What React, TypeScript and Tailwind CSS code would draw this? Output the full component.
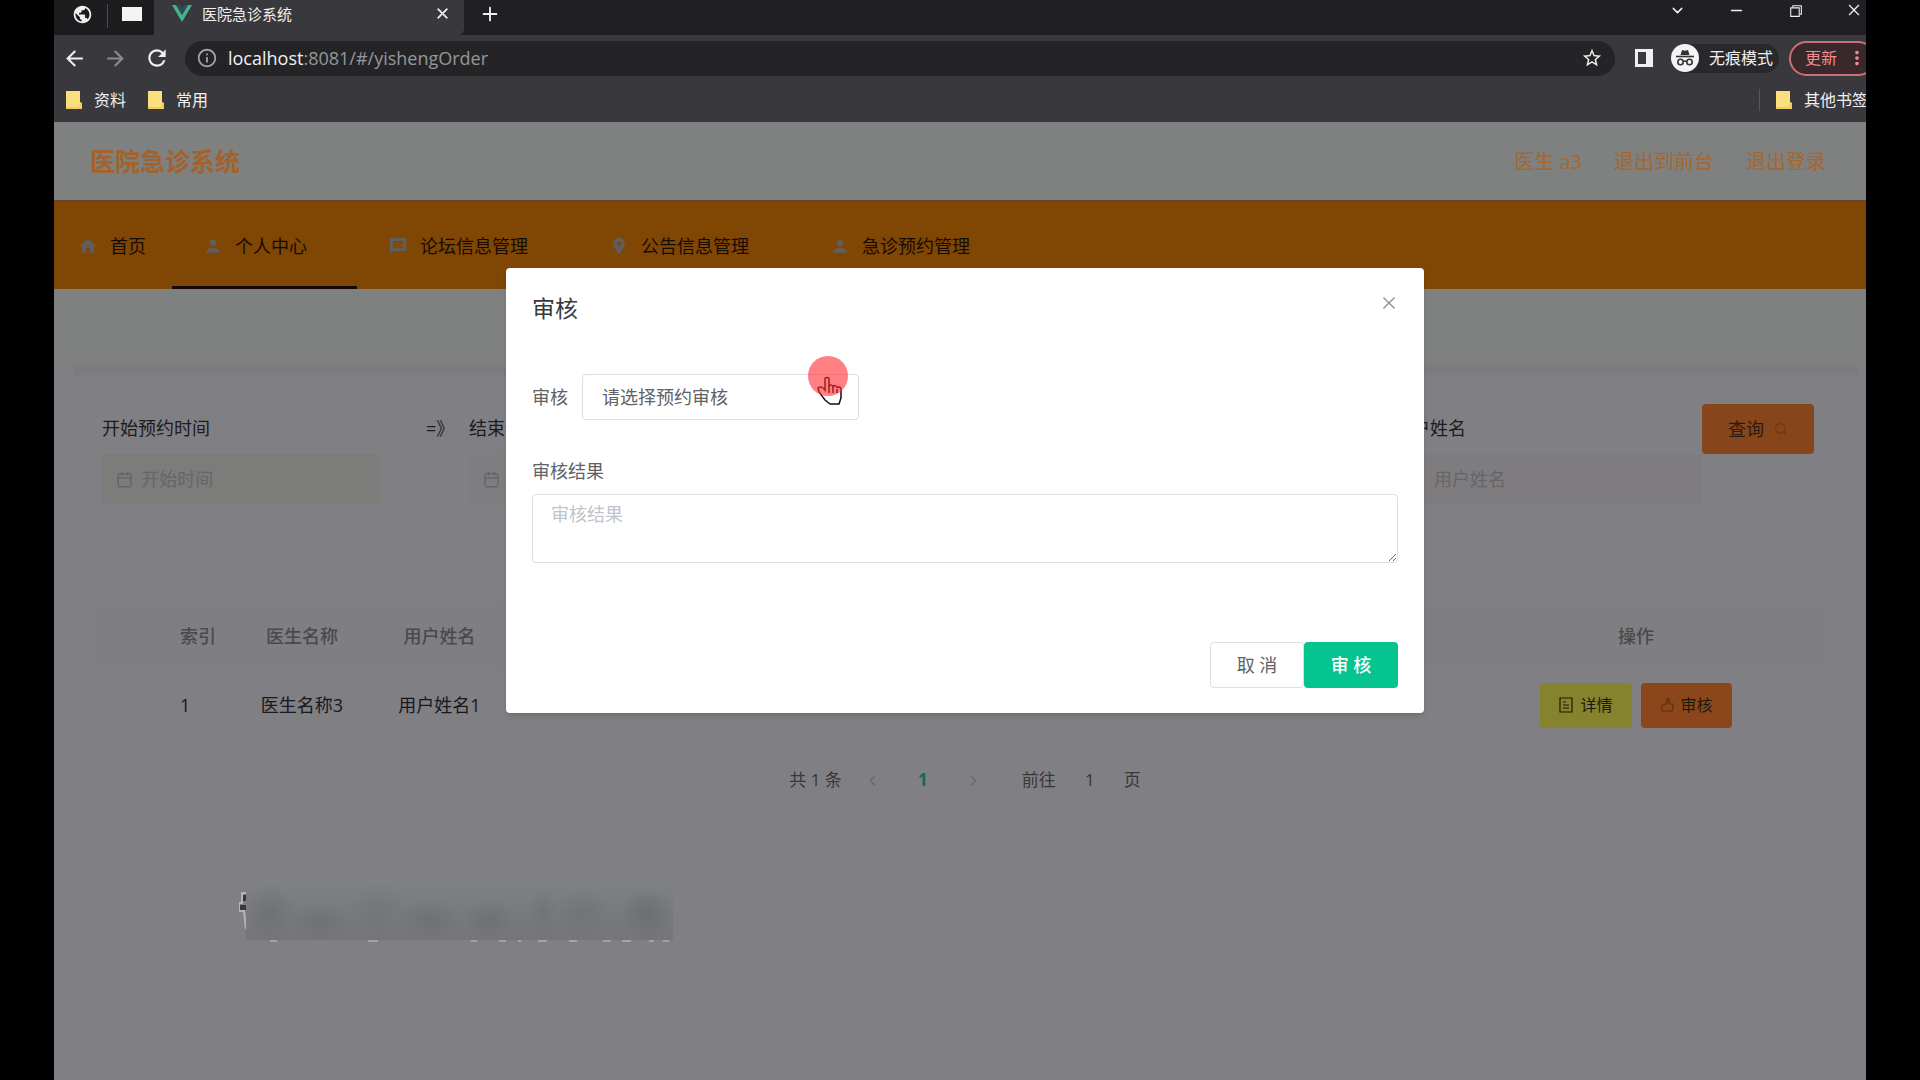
import React, { useState } from 'react'
import { AiOutlineClose } from 'react-icons/ai'
import { FiPlus, FiChevronDown, FiMinus } from 'react-icons/fi'
import { MdArrowBack, MdArrowForward, MdRefresh, MdInfoOutline, MdStarOutline, MdPublic, MdHome, MdPerson, MdMessage, MdLocationOn, MdMoreVert } from 'react-icons/md'
import { VscChromeRestore } from 'react-icons/vsc'
import { LuCalendar, LuChevronLeft, LuChevronRight, LuSearch } from 'react-icons/lu'

const menus = [
  { name: '个人中心', icon: MdPerson },
  { name: '论坛信息管理', icon: MdMessage },
  { name: '公告信息管理', icon: MdLocationOn },
  { name: '急诊预约管理', icon: MdPerson },
]

function Folder() {
  return (
    <svg width="16" height="18" viewBox="0 0 16 18">
      <path d="M0 0h14v11l2 1v6H0z" fill="#fbdf7c" />
      <path d="M0 16h13l1-4 2 1v5H0z" fill="#f3cf5c" />
    </svg>
  )
}

function Incognito() {
  return (
    <svg width="28" height="28" viewBox="0 0 28 28">
      <circle cx="14" cy="14" r="14" fill="#f4f4f5" />
      <path d="M9.500 11l1.500-5 3 .8 3-.8 1.500 5z" fill="#333236" />
      <path d="M5 12.500h18" stroke="#333236" strokeWidth="1.600" />
      <g fill="none" stroke="#333236" strokeWidth="1.600">
        <circle cx="9.500" cy="18" r="2.700" />
        <circle cx="18.500" cy="18" r="2.700" />
        <path d="M12.200 17.500q1.800-1 3.600 0" />
      </g>
    </svg>
  )
}

function DetailIcon() {
  return (
    <svg width="14" height="16" viewBox="0 0 14 16" fill="none" stroke="currentColor" strokeWidth="1.200">
      <path d="M1 1h12v14H1zM4 5h3M4 8h6M4 11h6" />
    </svg>
  )
}

function ThumbIcon() {
  return (
    <svg width="15" height="16" viewBox="0 0 15 16" fill="none" stroke="currentColor" strokeWidth="1.200" className="text-[#5b2f12]">
      <path d="M2 8h3l2-3V2c0-1 2-1 2 0v5h4v4l-1 3H2z" />
    </svg>
  )
}

function Browser() {
  return (
    <div className="bg-[#39383c] text-[#f0f0f1]">
      <div className="h-[35px] flex bg-[#202024]">
        <div className="w-[100px] flex items-start pt-1 pl-[18px] bg-[#1d1d1f]">
          <MdPublic size={21} />
          <span className="w-px h-6 ml-3.5 bg-[#4c4c50]"></span>
          <span className="w-5 h-3.5 mt-[3px] ml-3.5 bg-[#f4f4f4]"></span>
        </div>
        <div className="w-[310px] h-full flex items-start pt-[3px] pl-[18px] pr-3.5 bg-[#39383c] rounded-br-md">
          <svg width="20" height="20" viewBox="0 0 20 18">
            <path d="M0 1h4l6 10 6-10h4L10 18z" fill="#41b883" />
            <path d="M4 1h4l2 3.500L12 1h4l-6 10z" fill="#35495e" />
          </svg>
          <span className="ml-2.5 text-[15px] leading-[22px]">医院急诊系统</span>
          <button aria-label="关闭标签页" className="ml-auto mt-[3px]"><AiOutlineClose size={15} strokeWidth={50} /></button>
        </div>
        <button aria-label="新标签页" className="ml-[15px] h-7"><FiPlus size={22} /></button>
        <div className="ml-auto mr-3.5 h-5 flex items-center gap-[42px]">
          <button aria-label="搜索标签页"><FiChevronDown size={17} /></button>
          <button aria-label="最小化"><FiMinus size={17} /></button>
          <button aria-label="还原"><VscChromeRestore size={17} /></button>
          <button aria-label="关闭"><AiOutlineClose size={16} /></button>
        </div>
      </div>

      <div className="h-[46px] flex items-center pl-2">
        <button aria-label="后退"><MdArrowBack size={25} /></button>
        <button aria-label="前进" className="ml-4 text-[#8b8b8e]"><MdArrowForward size={25} /></button>
        <button aria-label="刷新" className="ml-4"><MdRefresh size={26} /></button>
        <div className="ml-[15px] h-[35px] grow flex items-center pl-[11px] pr-3 rounded-full bg-[#242427] text-lg">
          <MdInfoOutline size={22} className="text-[#a2a2a4]" />
          <span className="ml-2.5">localhost</span>
          <span className="text-[#97979a]">:8081/#/yishengOrder</span>
          <button aria-label="收藏" className="ml-auto"><MdStarOutline size={22} /></button>
        </div>
        <span className="ml-5 w-[18px] h-[18px] border-[3px] border-r-[7px] border-[#f0f0f1]"></span>
        <div className="ml-[18px] h-[29px] flex items-center gap-2.5 rounded-full bg-[#29292c] pr-1.5 text-base">
          <Incognito />
          <span>无痕模式</span>
        </div>
        <button className="ml-2.5 h-[35px] w-[87px] shrink-0 flex items-center justify-between pl-3.5 pr-1.5 rounded-full border-2 border-[#c9707a] bg-[#39292c] text-[#f08b8e] text-base">
          更新
          <MdMoreVert size={22} />
        </button>
      </div>

      <div className="h-[41px] flex items-center pl-3 pb-1 text-base">
        <Folder />
        <a href="#" className="ml-3">资料</a>
        <span className="w-[22px]"></span>
        <Folder />
        <a href="#" className="ml-3">常用</a>
        <span className="ml-auto w-px h-[22px] bg-[#58575b]"></span>
        <span className="w-4"></span>
        <Folder />
        <a href="#" className="ml-3 mr-2">其他书签</a>
      </div>
    </div>
  )
}

function Navbar() {
  return (
    <div>
      <div className="h-[78px] flex items-center justify-between pt-0.5 pl-9 pr-[50px] bg-[#7f8080]">
        <h1 className="text-[25px] font-bold text-[#a4622a]">医院急诊系统</h1>
        <div className="flex gap-8 text-xl text-[#a5672f]">
          <span>医生 a3</span>
          <a href="#">退出到前台</a>
          <a href="#">退出登录</a>
        </div>
      </div>
      <nav className="h-[89px] flex bg-[#7f4604] border-t-2 border-[#664430] text-lg text-[#170c02]">
        <a href="#" className="flex items-center gap-3 pl-6 pr-[26px]">
          <MdHome size={20} className="text-[#5f5e5c]" />
          首页
        </a>
        {menus.map((item, i) => (
          <a
            key={item.name}
            href="#"
            className={i === 0 ? 'flex items-center gap-3 pt-[3px] pl-[31px] pr-[50px] border-b-[3px] border-[#160707]' : 'flex items-center gap-3 pt-[3px] pl-[31px] pr-[50px] border-b-[3px] border-transparent'}
          >
            <item.icon size={20} className="text-[#5f5e5c]" />
            {item.name}
          </a>
        ))}
      </nav>
    </div>
  )
}

function Filters() {
  return (
    <form className="flex pl-7 pr-11 pt-[39px] text-lg text-[#1c1b1e]">
      <div className="w-[278px]">
        <label htmlFor="start" className="block leading-7">开始预约时间</label>
        <div className="mt-3 h-[50px] flex items-center gap-2 pl-3.5 bg-[#7c7c7b] text-[#666568]">
          <LuCalendar size={19} />
          <input id="start" placeholder="开始时间" className="w-full bg-transparent outline-none placeholder:text-[#666568]" />
        </div>
      </div>
      <span className="ml-[46px] w-[43px] leading-7">=》</span>
      <div className="w-[278px]">
        <label htmlFor="end" className="block leading-7">结束预约时间</label>
        <div className="mt-3 h-[50px] flex items-center gap-2 pl-3.5 bg-[#7e7d80] text-[#666568]">
          <LuCalendar size={19} />
          <input id="end" placeholder="结束时间" className="w-full bg-transparent outline-none placeholder:text-[#666568]" />
        </div>
      </div>
      <div className="ml-auto w-[308px]">
        <label htmlFor="user" className="block leading-7">用户姓名</label>
        <input id="user" placeholder="用户姓名" className="mt-3 h-[50px] w-full pl-10 bg-[#7e7c7e] outline-none placeholder:text-[#666568]" />
      </div>
      <button type="button" className="-mt-2.5 h-[50px] w-28 flex items-center justify-center gap-2.5 rounded bg-[#86451b] text-[#2c1a10]">
        查询
        <LuSearch size={14} className="text-[#6a3614]" />
      </button>
    </form>
  )
}

function Orders() {
  return (
    <table className="mt-[98px] w-full table-fixed text-lg">
      <thead>
        <tr className="h-[68px] text-[#4a494c] bg-[#7f7e82]">
          <th className="w-[71px]"></th>
          <th className="w-[66px] pl-[13px] text-left font-medium">索引</th>
          <th className="w-[138px] font-medium">医生名称</th>
          <th className="w-[137px] font-medium">用户姓名</th>
          <th></th>
          <th className="w-[380px] font-medium">操作</th>
        </tr>
      </thead>
      <tbody>
        <tr className="h-[70px] text-center text-[#19181b]">
          <td></td>
          <td className="pl-[13px] text-left">1</td>
          <td>医生名称3</td>
          <td>用户姓名1</td>
          <td></td>
          <td>
            <div className="flex justify-center gap-[9px] text-base text-[#1d1a0c]">
              <button className="h-[45px] w-[92px] flex items-center justify-center gap-[7px] rounded bg-[#85832c]">
                <DetailIcon />
                详情
              </button>
              <button className="h-[45px] w-[91px] flex items-center justify-center gap-[5px] rounded bg-[#8b471b]">
                <ThumbIcon />
                审核
              </button>
            </div>
          </td>
        </tr>
      </tbody>
    </table>
  )
}

function Pagination() {
  return (
    <div className="mt-[26px] h-7 flex items-center justify-center text-[17px] text-[#38373a]">
      <span>共 1 条</span>
      <button aria-label="上一页" className="ml-[22px] text-[#69686b]"><LuChevronLeft size={17} /></button>
      <button className="w-[84px] font-bold text-[#0e6d57]">1</button>
      <button aria-label="下一页" className="text-[#69686b]"><LuChevronRight size={17} /></button>
      <label htmlFor="page" className="ml-10">前往</label>
      <input id="page" defaultValue="1" className="w-[68px] bg-transparent text-center outline-none" />
      <span>页</span>
    </div>
  )
}

function Watermark() {
  return (
    <svg width="436" height="66" viewBox="0 0 436 66" className="ml-[185px] mt-[86px]">
      <defs>
        <linearGradient id="fade" x1="0" y1="0" x2="0" y2="1">
          <stop offset="0" stopColor="#7f8182" />
          <stop offset="0.500" stopColor="#797a7b" />
          <stop offset="1" stopColor="#757677" />
        </linearGradient>
        <radialGradient id="blob">
          <stop offset="0" stopColor="#6b6d6e" stopOpacity="0.700" />
          <stop offset="1" stopColor="#6b6d6e" stopOpacity="0" />
        </radialGradient>
      </defs>
      <path d="M7 13H3v10H0v8h5l2 18" fill="none" stroke="#b5b5b6" strokeWidth="2" />
      <path d="M4 15h4v6H4zM1 25h7v5H1z" fill="#38383a" />
      <rect x="7" width="427" height="60" fill="url(#fade)" />
      <ellipse cx="31" cy="34" rx="24" ry="30" fill="url(#blob)" />
      <ellipse cx="82" cy="42" rx="32" ry="18" fill="url(#blob)" />
      <ellipse cx="138" cy="30" rx="26" ry="28" fill="url(#blob)" opacity="0.500" />
      <ellipse cx="190" cy="40" rx="32" ry="20" fill="url(#blob)" />
      <ellipse cx="250" cy="40" rx="26" ry="20" fill="url(#blob)" />
      <ellipse cx="304" cy="33" rx="14" ry="26" fill="url(#blob)" opacity="0.700" />
      <ellipse cx="344" cy="33" rx="26" ry="26" fill="url(#blob)" opacity="0.700" />
      <ellipse cx="408" cy="34" rx="26" ry="26" fill="url(#blob)" />
      <ellipse cx="408" cy="34" rx="26" ry="26" fill="url(#blob)" opacity="0.500" />
      <path d="M31 61h7M129 61h10M232 61h6M260 61h7M279 61h3M299 61h9M330 61h8M364 61h8M383 61h9M410 61h5M424 61h6" stroke="#a3a3a5" strokeWidth="2" />
    </svg>
  )
}

function Pointer() {
  return (
    <svg width="42" height="52" viewBox="0 0 42 52" className="absolute right-2.5 top-[-19px] pointer-events-none">
      <path d="M20 44l-5-4-6-8-1-4c2-2 5-1 7 2V19c0-2 4-2 4 0v8c1-3 4-2 4 0 1-2 4-2 4 1 1-2 4-1 4 1v9l-2 6z" transform="translate(3 5)" fill="#fff" stroke="#111" strokeWidth="1.500" />
      <path d="M22 32v6M26 32v6M30 34v4" stroke="#111" strokeWidth="1.500" />
      <circle cx="21" cy="21" r="20" fill="#ff2a30" fillOpacity="0.600" />
    </svg>
  )
}

function AuditDialog({ onClose }: { onClose: () => void }) {
  const [result, setResult] = useState('')

  return (
    <div className="absolute inset-0 flex justify-center items-start pt-[146px]">
      <div role="dialog" aria-labelledby="title" className="w-[918px] max-w-full px-[26px] pt-[25px] pb-[25px] rounded-sm bg-white shadow-md text-lg text-[#606266]">
        <div className="flex justify-between">
          <h2 id="title" className="text-[23px] leading-[30px] text-[#37393d]">审核</h2>
          <button aria-label="关闭" onClick={onClose} className="h-5 text-[#909399]"><AiOutlineClose size={18} /></button>
        </div>
        <div className="mt-[51px] flex items-center">
          <label htmlFor="audit" className="w-[50px]">审核</label>
          <div className="relative w-[277px]">
            <select id="audit" className="h-[46px] w-full appearance-none rounded border border-[#dcdfe6] bg-white pl-[19px] outline-none">
              <option>请选择预约审核</option>
              <option>通过</option>
              <option>未通过</option>
            </select>
            <Pointer />
          </div>
        </div>
        <label htmlFor="result" className="mt-[37px] block leading-7">审核结果</label>
        <textarea
          id="result"
          placeholder="审核结果"
          value={result}
          onChange={(e) => setResult(e.target.value)}
          className="mt-[9px] block h-[69px] w-full resize-y rounded border border-[#dcdfe6] px-[18px] py-[5px] outline-none placeholder:text-[#c0c4cc]"
        />
        <div className="mt-[79px] flex justify-end">
          <button onClick={onClose} className="h-[46px] w-[94px] rounded border border-[#dcdfe6]">取 消</button>
          <button onClick={onClose} className="h-[46px] w-[94px] rounded bg-[#05c48f] font-medium text-white">审 核</button>
        </div>
      </div>
    </div>
  )
}

function App() {
  const [open, setOpen] = useState(true)

  return (
    <div className="min-h-screen flex bg-black px-[54px] font-['Open_Sans','Noto_Sans_CJK_SC',sans-serif]">
      <div className="grow overflow-hidden">
        {/* the window runs a little past the right edge */}
        <div className="min-h-screen -mr-2.5 flex flex-col">
          <Browser />
          <div className="relative grow bg-[#807f83]">
            <Navbar />
            <div className="h-[76px] bg-[#7f8080]"></div>
            <div className="ml-5 mr-[18px] border-t-[10px] border-[#7d7b80]">
              <Filters />
              <div className="pl-[22px] pr-8">
                <Orders />
              </div>
            </div>
            <Pagination />
            <Watermark />
            {open && <AuditDialog onClose={() => setOpen(false)} />}
          </div>
        </div>
      </div>
    </div>
  )
}

export default App
